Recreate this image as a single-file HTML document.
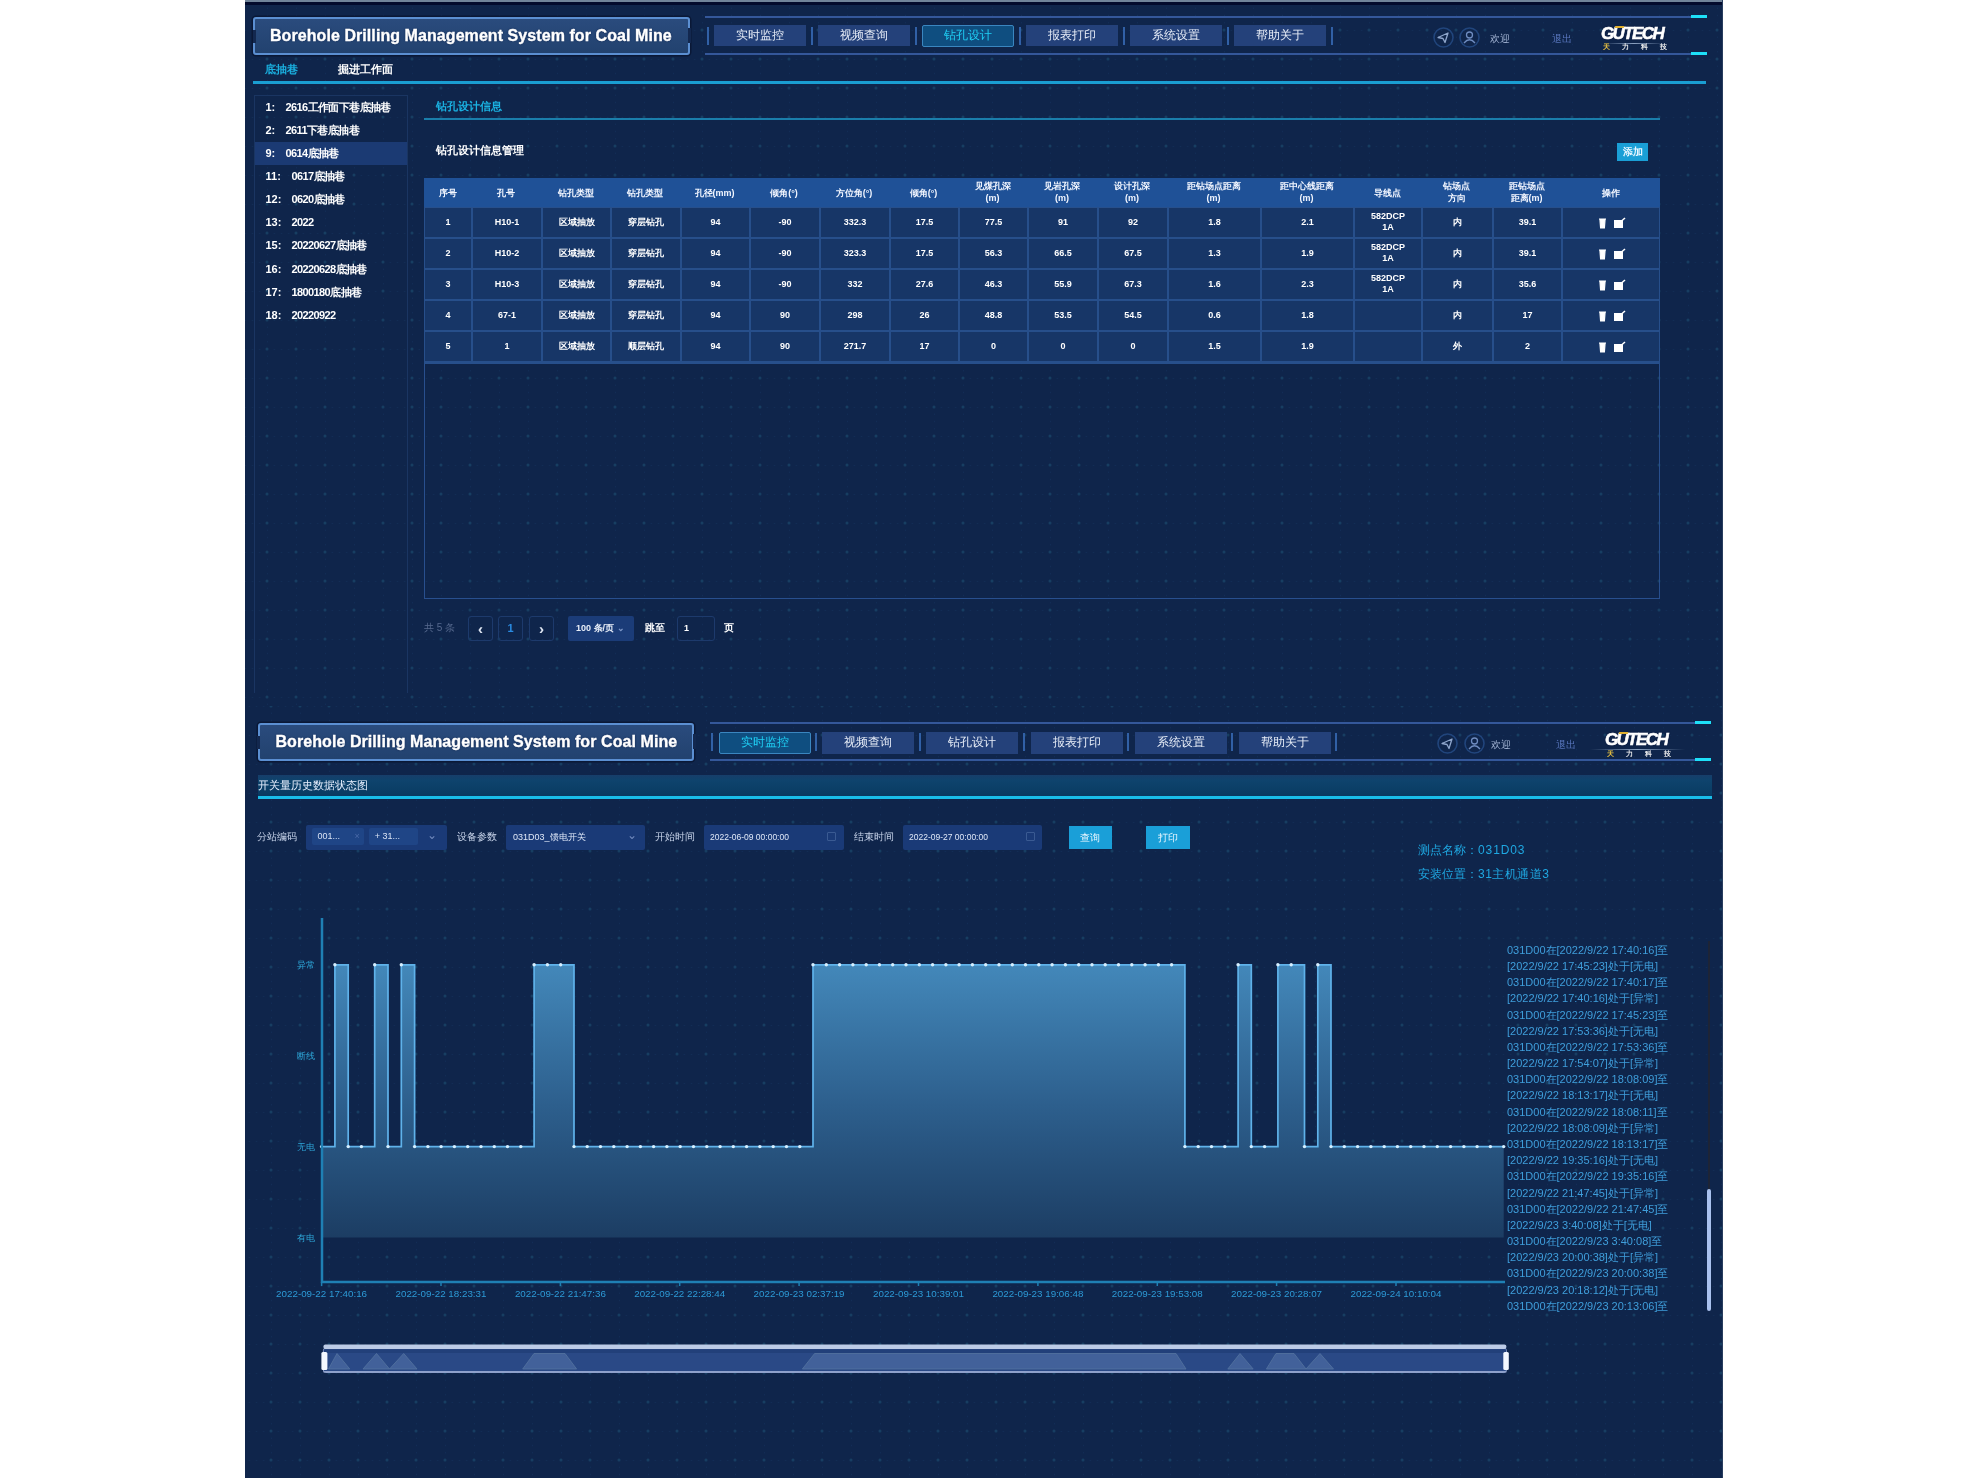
<!DOCTYPE html>
<html><head><meta charset="utf-8">
<style>
*{box-sizing:border-box;margin:0;padding:0}
html,body{width:1967px;height:1478px;overflow:hidden;background:#fff;font-family:"Liberation Sans",sans-serif}
.a{position:absolute}
#panel{filter:blur(0.5px);position:absolute;left:245px;top:0;width:1478px;height:1478px;background-color:#0f254b;overflow:hidden}

.title{position:absolute;border:2px solid #5b8fd2;border-radius:3px;background:linear-gradient(#2a4b7d,#22426f);box-shadow:0 0 0 1.5px #0a1836;text-shadow:0 0 2px #0b1c44;-webkit-text-stroke:0.35px #fff;color:#fff;font-weight:bold;font-size:16px;white-space:nowrap;line-height:34px;padding-left:15px;letter-spacing:0.07px}
.navl{position:absolute;height:2px;background:#34579a}
.sep{position:absolute;width:2px;height:18px;background:#3160a6}
.btn{position:absolute;height:21px;background:#24417a;color:#e8eef8;font-size:12px;text-align:center;line-height:21px}
.btn.on{background:#0f4e80;border:1.5px solid #3a86c0;border-radius:2px;color:#1fd0f5;line-height:19px}
.tick{position:absolute;width:16px;height:3px;background:#1ee0f8}
.cyan{position:absolute;height:3px;background:#1a9ed2}
.ico{position:absolute;width:19px;height:19px;border:1.5px solid #2f4f86;border-radius:50%}
.b{font-weight:bold}
.th{color:#f2f6ff;font-size:9px;text-align:center;white-space:nowrap}
.td{background:#173667;color:#fff;font-size:9px;text-align:center;white-space:nowrap}
.logo{color:#fff;font-weight:bold;font-style:italic;font-size:17px;line-height:18px;letter-spacing:-1.6px;-webkit-text-stroke:0.6px #fff;text-shadow:0 0 2px #000a30}
.sel{background:#1a3a77;border-radius:2px;color:#dfe8f8;font-size:9px;white-space:nowrap}
.tag{background:#1f4586;border-radius:2px;color:#d8e2f4;font-size:9px;line-height:17px;padding-left:6px;white-space:nowrap}
.qbtn{background:#1a9fd8;color:#eaf7ff;font-size:10px;line-height:23px;text-align:center}
.txt.leg{color:#3f9edb;font-size:11px}
.xl{font-family:"Liberation Sans",sans-serif;font-size:9.8px;fill:#2d9ad6}
.yl{font-family:"Liberation Sans",sans-serif;font-size:9px;fill:#2ea6d8}
.txt{position:absolute;white-space:nowrap;font-size:11px;color:#fff;line-height:12px}
</style></head><body>
<div id="panel">
 <div class="a" style="left:0;top:0;width:1478px;height:2px;background:#70849a"></div>
 <div class="a" style="left:0;top:2px;width:1478px;height:3px;background:#020a2c"></div>
 <svg class="a" style="left:0;top:0" width="1478" height="1478">
  <defs>
   <pattern id="g1" x="22" y="1" width="29" height="29" patternUnits="userSpaceOnUse">
    <g fill="#173e62"><circle cx="0" cy="0" r="1.5"/><circle cx="29" cy="0" r="1.5"/><circle cx="0" cy="29" r="1.5"/><circle cx="29" cy="29" r="1.5"/></g>
    <g fill="#13305a"><circle cx="7.25" cy="0" r=".8"/><circle cx="14.5" cy="0" r=".8"/><circle cx="21.75" cy="0" r=".8"/><circle cx="0" cy="7.25" r=".8"/><circle cx="0" cy="14.5" r=".8"/><circle cx="0" cy="21.75" r=".8"/></g>
   </pattern>
   <pattern id="g2" x="26" y="706" width="29" height="29" patternUnits="userSpaceOnUse">
    <g fill="#173e62"><circle cx="0" cy="0" r="1.5"/><circle cx="29" cy="0" r="1.5"/><circle cx="0" cy="29" r="1.5"/><circle cx="29" cy="29" r="1.5"/></g>
    <g fill="#13305a"><circle cx="7.25" cy="0" r=".8"/><circle cx="14.5" cy="0" r=".8"/><circle cx="21.75" cy="0" r=".8"/><circle cx="0" cy="7.25" r=".8"/><circle cx="0" cy="14.5" r=".8"/><circle cx="0" cy="21.75" r=".8"/></g>
   </pattern>
  </defs>
  <rect x="0" y="5" width="1478" height="701" fill="url(#g1)"/>
  <rect x="0" y="706" width="1478" height="772" fill="url(#g2)"/>
 </svg>

 <!-- ===== TOP SCREEN HEADER ===== -->
 <div class="title" style="left:8px;top:17px;width:437px;height:38px">Borehole Drilling Management System for Coal Mine</div>
 <div class="a" style="left:7.5px;top:29.5px;width:3px;height:13px;background:#13284f"></div>
 <div class="a" style="left:443px;top:28px;width:3px;height:15px;background:#13284f"></div>
 <div class="navl" style="left:460px;top:16px;width:986px"></div>
 <div class="navl" style="left:460px;top:53px;width:986px"></div>
 <div class="tick" style="left:1446px;top:15px"></div>
 <div class="tick" style="left:1446px;top:52px"></div>
 <div class="sep" style="left:462px;top:27px"></div>
 <div class="btn" style="left:469px;top:25px;width:92px">实时监控</div>
 <div class="sep" style="left:566px;top:27px"></div>
 <div class="btn" style="left:573px;top:25px;width:92px">视频查询</div>
 <div class="sep" style="left:670px;top:27px"></div>
 <div class="btn on" style="left:677px;top:25px;width:92px;height:22px">钻孔设计</div>
 <div class="sep" style="left:774px;top:27px"></div>
 <div class="btn" style="left:781px;top:25px;width:92px">报表打印</div>
 <div class="sep" style="left:878px;top:27px"></div>
 <div class="btn" style="left:885px;top:25px;width:92px">系统设置</div>
 <div class="sep" style="left:982px;top:27px"></div>
 <div class="btn" style="left:989px;top:25px;width:92px">帮助关于</div>
 <div class="sep" style="left:1086px;top:27px"></div>
 <svg class="a" style="left:1187.5px;top:27px" width="21" height="21"><circle cx="10.5" cy="10.5" r="9.5" fill="none" stroke="#21457c" stroke-width="1.6"/><path d="M5 10.5 L15 6 L12 15.5 L10 11.5 Z" fill="none" stroke="#8fa6cc" stroke-width="1.3" stroke-linejoin="round"/></svg>
 <svg class="a" style="left:1213.5px;top:27px" width="21" height="21"><circle cx="10.5" cy="10.5" r="9.5" fill="none" stroke="#21457c" stroke-width="1.6"/><circle cx="10.5" cy="8" r="3" fill="none" stroke="#6f8cc0" stroke-width="1.3"/><path d="M5 16 Q10.5 9.5 16 16" fill="none" stroke="#6f8cc0" stroke-width="1.3"/></svg>
 <div class="txt" style="left:1245px;top:33px;color:#9fb0d0;font-size:10px">欢迎</div>
 <div class="txt" style="left:1307px;top:33px;color:#5a78c0;font-size:10px">退出</div>
 <div class="a logo" style="left:1356px;top:24.5px">GUTECH</div>
 <div class="a" style="left:1370px;top:25.5px;width:9px;height:2px;background:#e0b030;transform:skewX(-20deg)"></div>
 <div class="a" style="left:1358px;top:43px;width:62px;height:1px;background:linear-gradient(90deg,transparent,#8aa0c0,transparent)"></div>
 <div class="txt b" style="left:1357.5px;top:43px;font-size:6.5px;line-height:7px;letter-spacing:12px;color:#f0f0f0"><span style="color:#e8c040">天</span>力科技</div>
 <div class="cyan" style="left:8px;top:81px;width:1453px"></div>
 <div class="txt b" style="left:20px;top:63px;color:#1ab0e0">底抽巷</div>
 <div class="txt b" style="left:93px;top:63px">掘进工作面</div>
<div class="a" id="redge" style="left:1476.5px;top:0;width:1.5px;height:1478px;background:#283d5e"></div>
<!-- TOPBODY -->
<div class="a" style="left:9px;top:95px;width:154px;height:598px;border:1px solid #1a3562;border-bottom:none"></div>
<div class="a" style="left:10px;top:142px;width:152px;height:23px;background:#1b3a73"></div>
<div class="txt b" style="left:20.5px;top:100.5px">1:</div>
<div class="txt b" style="left:40.5px;top:100.5px;letter-spacing:-0.6px">2616工作面下巷底抽巷</div>
<div class="txt b" style="left:20.5px;top:123.7px">2:</div>
<div class="txt b" style="left:40.5px;top:123.7px;letter-spacing:-0.6px">2611下巷底抽巷</div>
<div class="txt b" style="left:20.5px;top:146.8px">9:</div>
<div class="txt b" style="left:40.5px;top:146.8px;letter-spacing:-0.6px">0614底抽巷</div>
<div class="txt b" style="left:20.5px;top:169.9px">11:</div>
<div class="txt b" style="left:46.5px;top:169.9px;letter-spacing:-0.6px">0617底抽巷</div>
<div class="txt b" style="left:20.5px;top:193.1px">12:</div>
<div class="txt b" style="left:46.5px;top:193.1px;letter-spacing:-0.6px">0620底抽巷</div>
<div class="txt b" style="left:20.5px;top:216.2px">13:</div>
<div class="txt b" style="left:46.5px;top:216.2px;letter-spacing:-0.6px">2022</div>
<div class="txt b" style="left:20.5px;top:239.4px">15:</div>
<div class="txt b" style="left:46.5px;top:239.4px;letter-spacing:-0.6px">20220627底抽巷</div>
<div class="txt b" style="left:20.5px;top:262.5px">16:</div>
<div class="txt b" style="left:46.5px;top:262.5px;letter-spacing:-0.6px">20220628底抽巷</div>
<div class="txt b" style="left:20.5px;top:285.7px">17:</div>
<div class="txt b" style="left:46.5px;top:285.7px;letter-spacing:-0.6px">1800180底抽巷</div>
<div class="txt b" style="left:20.5px;top:308.9px">18:</div>
<div class="txt b" style="left:46.5px;top:308.9px;letter-spacing:-0.6px">20220922</div>
<div class="txt b" style="left:191px;top:99.5px;color:#1ab2e2">钻孔设计信息</div>
<div class="a" style="left:179px;top:117.5px;width:1236px;height:2px;background:#1a7eab"></div>
<div class="txt b" style="left:191px;top:144px">钻孔设计信息管理</div>
<div class="a b" style="left:1372px;top:143px;width:31px;height:18px;background:#1a9fd6;color:#e6f6ff;font-size:10px;line-height:18px;text-align:center">添加</div>
<div class="a" style="left:179px;top:178px;width:1236px;height:421px;border:1.5px solid #284f8e"></div>
<div class="a" style="left:179px;top:178px;width:1236px;height:30px;background:#1f5197"></div>
<div class="a" style="left:179px;top:207px;width:1236px;height:157px;background:#274f8b"></div>
<div class="a b th" style="left:179px;top:178px;width:47px;line-height:30px">序号</div>
<div class="a b th" style="left:226px;top:178px;width:70px;line-height:30px">孔号</div>
<div class="a b th" style="left:296px;top:178px;width:69px;line-height:30px">钻孔类型</div>
<div class="a b th" style="left:365px;top:178px;width:70px;line-height:30px">钻孔类型</div>
<div class="a b th" style="left:435px;top:178px;width:69px;line-height:30px">孔径(mm)</div>
<div class="a b th" style="left:504px;top:178px;width:70px;line-height:30px">倾角(°)</div>
<div class="a b th" style="left:574px;top:178px;width:70px;line-height:30px">方位角(°)</div>
<div class="a b th" style="left:644px;top:178px;width:69px;line-height:30px">倾角(°)</div>
<div class="a b th" style="left:713px;top:180px;width:69px;line-height:12px">见煤孔深<br>(m)</div>
<div class="a b th" style="left:782px;top:180px;width:70px;line-height:12px">见岩孔深<br>(m)</div>
<div class="a b th" style="left:852px;top:180px;width:70px;line-height:12px">设计孔深<br>(m)</div>
<div class="a b th" style="left:922px;top:180px;width:93px;line-height:12px">距钻场点距离<br>(m)</div>
<div class="a b th" style="left:1015px;top:180px;width:93px;line-height:12px">距中心线距离<br>(m)</div>
<div class="a b th" style="left:1108px;top:178px;width:68px;line-height:30px">导线点</div>
<div class="a b th" style="left:1176px;top:180px;width:71px;line-height:12px">钻场点<br>方向</div>
<div class="a b th" style="left:1247px;top:180px;width:69px;line-height:12px">距钻场点<br>距离(m)</div>
<div class="a b th" style="left:1316px;top:178px;width:99px;line-height:30px">操作</div>
<div class="a b td" style="left:180px;top:208px;width:46px;height:29px;line-height:29px;padding-top:0px">1</div>
<div class="a b td" style="left:228px;top:208px;width:68px;height:29px;line-height:29px;padding-top:0px">H10-1</div>
<div class="a b td" style="left:298px;top:208px;width:67px;height:29px;line-height:29px;padding-top:0px">区域抽放</div>
<div class="a b td" style="left:367px;top:208px;width:68px;height:29px;line-height:29px;padding-top:0px">穿层钻孔</div>
<div class="a b td" style="left:437px;top:208px;width:67px;height:29px;line-height:29px;padding-top:0px">94</div>
<div class="a b td" style="left:506px;top:208px;width:68px;height:29px;line-height:29px;padding-top:0px">-90</div>
<div class="a b td" style="left:576px;top:208px;width:68px;height:29px;line-height:29px;padding-top:0px">332.3</div>
<div class="a b td" style="left:646px;top:208px;width:67px;height:29px;line-height:29px;padding-top:0px">17.5</div>
<div class="a b td" style="left:715px;top:208px;width:67px;height:29px;line-height:29px;padding-top:0px">77.5</div>
<div class="a b td" style="left:784px;top:208px;width:68px;height:29px;line-height:29px;padding-top:0px">91</div>
<div class="a b td" style="left:854px;top:208px;width:68px;height:29px;line-height:29px;padding-top:0px">92</div>
<div class="a b td" style="left:924px;top:208px;width:91px;height:29px;line-height:29px;padding-top:0px">1.8</div>
<div class="a b td" style="left:1017px;top:208px;width:91px;height:29px;line-height:29px;padding-top:0px">2.1</div>
<div class="a b td" style="left:1110px;top:208px;width:66px;height:29px;line-height:11px;padding-top:3px">582DCP<br>1A</div>
<div class="a b td" style="left:1178px;top:208px;width:69px;height:29px;line-height:29px;padding-top:0px">内</div>
<div class="a b td" style="left:1249px;top:208px;width:67px;height:29px;line-height:29px;padding-top:0px">39.1</div>
<div class="a b td" style="left:1318px;top:208px;width:96px;height:29px;line-height:29px;padding-top:0px"></div>
<svg class="a" style="left:1352px;top:217px" width="30" height="12"><path d="M2 2h7M3 3h5l-.6 8h-3.8z" fill="#fff" stroke="#fff" stroke-width="1.2"/><rect x="17" y="3" width="9" height="8" fill="#fff"/><path d="M21 7l7-6" stroke="#fff" stroke-width="1.6"/></svg>
<div class="a b td" style="left:180px;top:239px;width:46px;height:29px;line-height:29px;padding-top:0px">2</div>
<div class="a b td" style="left:228px;top:239px;width:68px;height:29px;line-height:29px;padding-top:0px">H10-2</div>
<div class="a b td" style="left:298px;top:239px;width:67px;height:29px;line-height:29px;padding-top:0px">区域抽放</div>
<div class="a b td" style="left:367px;top:239px;width:68px;height:29px;line-height:29px;padding-top:0px">穿层钻孔</div>
<div class="a b td" style="left:437px;top:239px;width:67px;height:29px;line-height:29px;padding-top:0px">94</div>
<div class="a b td" style="left:506px;top:239px;width:68px;height:29px;line-height:29px;padding-top:0px">-90</div>
<div class="a b td" style="left:576px;top:239px;width:68px;height:29px;line-height:29px;padding-top:0px">323.3</div>
<div class="a b td" style="left:646px;top:239px;width:67px;height:29px;line-height:29px;padding-top:0px">17.5</div>
<div class="a b td" style="left:715px;top:239px;width:67px;height:29px;line-height:29px;padding-top:0px">56.3</div>
<div class="a b td" style="left:784px;top:239px;width:68px;height:29px;line-height:29px;padding-top:0px">66.5</div>
<div class="a b td" style="left:854px;top:239px;width:68px;height:29px;line-height:29px;padding-top:0px">67.5</div>
<div class="a b td" style="left:924px;top:239px;width:91px;height:29px;line-height:29px;padding-top:0px">1.3</div>
<div class="a b td" style="left:1017px;top:239px;width:91px;height:29px;line-height:29px;padding-top:0px">1.9</div>
<div class="a b td" style="left:1110px;top:239px;width:66px;height:29px;line-height:11px;padding-top:3px">582DCP<br>1A</div>
<div class="a b td" style="left:1178px;top:239px;width:69px;height:29px;line-height:29px;padding-top:0px">内</div>
<div class="a b td" style="left:1249px;top:239px;width:67px;height:29px;line-height:29px;padding-top:0px">39.1</div>
<div class="a b td" style="left:1318px;top:239px;width:96px;height:29px;line-height:29px;padding-top:0px"></div>
<svg class="a" style="left:1352px;top:248px" width="30" height="12"><path d="M2 2h7M3 3h5l-.6 8h-3.8z" fill="#fff" stroke="#fff" stroke-width="1.2"/><rect x="17" y="3" width="9" height="8" fill="#fff"/><path d="M21 7l7-6" stroke="#fff" stroke-width="1.6"/></svg>
<div class="a b td" style="left:180px;top:270px;width:46px;height:29px;line-height:29px;padding-top:0px">3</div>
<div class="a b td" style="left:228px;top:270px;width:68px;height:29px;line-height:29px;padding-top:0px">H10-3</div>
<div class="a b td" style="left:298px;top:270px;width:67px;height:29px;line-height:29px;padding-top:0px">区域抽放</div>
<div class="a b td" style="left:367px;top:270px;width:68px;height:29px;line-height:29px;padding-top:0px">穿层钻孔</div>
<div class="a b td" style="left:437px;top:270px;width:67px;height:29px;line-height:29px;padding-top:0px">94</div>
<div class="a b td" style="left:506px;top:270px;width:68px;height:29px;line-height:29px;padding-top:0px">-90</div>
<div class="a b td" style="left:576px;top:270px;width:68px;height:29px;line-height:29px;padding-top:0px">332</div>
<div class="a b td" style="left:646px;top:270px;width:67px;height:29px;line-height:29px;padding-top:0px">27.6</div>
<div class="a b td" style="left:715px;top:270px;width:67px;height:29px;line-height:29px;padding-top:0px">46.3</div>
<div class="a b td" style="left:784px;top:270px;width:68px;height:29px;line-height:29px;padding-top:0px">55.9</div>
<div class="a b td" style="left:854px;top:270px;width:68px;height:29px;line-height:29px;padding-top:0px">67.3</div>
<div class="a b td" style="left:924px;top:270px;width:91px;height:29px;line-height:29px;padding-top:0px">1.6</div>
<div class="a b td" style="left:1017px;top:270px;width:91px;height:29px;line-height:29px;padding-top:0px">2.3</div>
<div class="a b td" style="left:1110px;top:270px;width:66px;height:29px;line-height:11px;padding-top:3px">582DCP<br>1A</div>
<div class="a b td" style="left:1178px;top:270px;width:69px;height:29px;line-height:29px;padding-top:0px">内</div>
<div class="a b td" style="left:1249px;top:270px;width:67px;height:29px;line-height:29px;padding-top:0px">35.6</div>
<div class="a b td" style="left:1318px;top:270px;width:96px;height:29px;line-height:29px;padding-top:0px"></div>
<svg class="a" style="left:1352px;top:279px" width="30" height="12"><path d="M2 2h7M3 3h5l-.6 8h-3.8z" fill="#fff" stroke="#fff" stroke-width="1.2"/><rect x="17" y="3" width="9" height="8" fill="#fff"/><path d="M21 7l7-6" stroke="#fff" stroke-width="1.6"/></svg>
<div class="a b td" style="left:180px;top:301px;width:46px;height:29px;line-height:29px;padding-top:0px">4</div>
<div class="a b td" style="left:228px;top:301px;width:68px;height:29px;line-height:29px;padding-top:0px">67-1</div>
<div class="a b td" style="left:298px;top:301px;width:67px;height:29px;line-height:29px;padding-top:0px">区域抽放</div>
<div class="a b td" style="left:367px;top:301px;width:68px;height:29px;line-height:29px;padding-top:0px">穿层钻孔</div>
<div class="a b td" style="left:437px;top:301px;width:67px;height:29px;line-height:29px;padding-top:0px">94</div>
<div class="a b td" style="left:506px;top:301px;width:68px;height:29px;line-height:29px;padding-top:0px">90</div>
<div class="a b td" style="left:576px;top:301px;width:68px;height:29px;line-height:29px;padding-top:0px">298</div>
<div class="a b td" style="left:646px;top:301px;width:67px;height:29px;line-height:29px;padding-top:0px">26</div>
<div class="a b td" style="left:715px;top:301px;width:67px;height:29px;line-height:29px;padding-top:0px">48.8</div>
<div class="a b td" style="left:784px;top:301px;width:68px;height:29px;line-height:29px;padding-top:0px">53.5</div>
<div class="a b td" style="left:854px;top:301px;width:68px;height:29px;line-height:29px;padding-top:0px">54.5</div>
<div class="a b td" style="left:924px;top:301px;width:91px;height:29px;line-height:29px;padding-top:0px">0.6</div>
<div class="a b td" style="left:1017px;top:301px;width:91px;height:29px;line-height:29px;padding-top:0px">1.8</div>
<div class="a b td" style="left:1110px;top:301px;width:66px;height:29px;line-height:29px;padding-top:0px"></div>
<div class="a b td" style="left:1178px;top:301px;width:69px;height:29px;line-height:29px;padding-top:0px">内</div>
<div class="a b td" style="left:1249px;top:301px;width:67px;height:29px;line-height:29px;padding-top:0px">17</div>
<div class="a b td" style="left:1318px;top:301px;width:96px;height:29px;line-height:29px;padding-top:0px"></div>
<svg class="a" style="left:1352px;top:310px" width="30" height="12"><path d="M2 2h7M3 3h5l-.6 8h-3.8z" fill="#fff" stroke="#fff" stroke-width="1.2"/><rect x="17" y="3" width="9" height="8" fill="#fff"/><path d="M21 7l7-6" stroke="#fff" stroke-width="1.6"/></svg>
<div class="a b td" style="left:180px;top:332px;width:46px;height:29px;line-height:29px;padding-top:0px">5</div>
<div class="a b td" style="left:228px;top:332px;width:68px;height:29px;line-height:29px;padding-top:0px">1</div>
<div class="a b td" style="left:298px;top:332px;width:67px;height:29px;line-height:29px;padding-top:0px">区域抽放</div>
<div class="a b td" style="left:367px;top:332px;width:68px;height:29px;line-height:29px;padding-top:0px">顺层钻孔</div>
<div class="a b td" style="left:437px;top:332px;width:67px;height:29px;line-height:29px;padding-top:0px">94</div>
<div class="a b td" style="left:506px;top:332px;width:68px;height:29px;line-height:29px;padding-top:0px">90</div>
<div class="a b td" style="left:576px;top:332px;width:68px;height:29px;line-height:29px;padding-top:0px">271.7</div>
<div class="a b td" style="left:646px;top:332px;width:67px;height:29px;line-height:29px;padding-top:0px">17</div>
<div class="a b td" style="left:715px;top:332px;width:67px;height:29px;line-height:29px;padding-top:0px">0</div>
<div class="a b td" style="left:784px;top:332px;width:68px;height:29px;line-height:29px;padding-top:0px">0</div>
<div class="a b td" style="left:854px;top:332px;width:68px;height:29px;line-height:29px;padding-top:0px">0</div>
<div class="a b td" style="left:924px;top:332px;width:91px;height:29px;line-height:29px;padding-top:0px">1.5</div>
<div class="a b td" style="left:1017px;top:332px;width:91px;height:29px;line-height:29px;padding-top:0px">1.9</div>
<div class="a b td" style="left:1110px;top:332px;width:66px;height:29px;line-height:29px;padding-top:0px"></div>
<div class="a b td" style="left:1178px;top:332px;width:69px;height:29px;line-height:29px;padding-top:0px">外</div>
<div class="a b td" style="left:1249px;top:332px;width:67px;height:29px;line-height:29px;padding-top:0px">2</div>
<div class="a b td" style="left:1318px;top:332px;width:96px;height:29px;line-height:29px;padding-top:0px"></div>
<svg class="a" style="left:1352px;top:341px" width="30" height="12"><path d="M2 2h7M3 3h5l-.6 8h-3.8z" fill="#fff" stroke="#fff" stroke-width="1.2"/><rect x="17" y="3" width="9" height="8" fill="#fff"/><path d="M21 7l7-6" stroke="#fff" stroke-width="1.6"/></svg>
<div class="txt" style="left:179px;top:622px;color:#56698e;font-size:10px">共 5 条</div>
<div class="a" style="left:223px;top:616px;width:25px;height:25px;border:1px solid #1d3a6c;border-radius:3px;color:#dfe6f2;font-size:15px;line-height:23px;text-align:center;font-weight:bold">‹</div>
<div class="a" style="left:253px;top:616px;width:25px;height:25px;border:1px solid #1d3a6c;border-radius:3px;color:#2a8ae0;font-size:11px;line-height:23px;text-align:center;font-weight:bold">1</div>
<div class="a" style="left:284px;top:616px;width:25px;height:25px;border:1px solid #1d3a6c;border-radius:3px;color:#dfe6f2;font-size:15px;line-height:23px;text-align:center;font-weight:bold">›</div>
<div class="a b" style="left:323px;top:616px;width:66px;height:25px;background:#1b3c78;border-radius:2px;color:#e8eef8;font-size:9px;line-height:25px;padding-left:8px">100 条/页 <span style="color:#7f98c8">⌄</span></div>
<div class="txt b" style="left:400px;top:622px;font-size:10px">跳至</div>
<div class="a" style="left:432px;top:616px;width:38px;height:25px;border:1px solid #1d3a6c;border-radius:3px;color:#fff;font-size:9px;line-height:23px;padding-left:6px;font-weight:bold">1</div>
<div class="txt b" style="left:479px;top:622px;font-size:10px">页</div>
<!-- /TOPBODY -->
<!-- BOTBODY -->
<div class="title" style="left:12.5px;top:723px;width:436.5px;height:38px;padding-left:16px">Borehole Drilling Management System for Coal Mine</div>
<div class="a" style="left:12px;top:735.5px;width:3px;height:13px;background:#13284f"></div>
<div class="a" style="left:447.5px;top:734px;width:3px;height:15px;background:#13284f"></div>
<div class="navl" style="left:465px;top:721.5px;width:985px"></div>
<div class="navl" style="left:465px;top:759px;width:985px"></div>
<div class="tick" style="left:1450px;top:720.5px"></div>
<div class="tick" style="left:1450px;top:758px"></div>
<div class="sep" style="left:465.7px;top:733px"></div>
<div class="sep" style="left:569.8px;top:733px"></div>
<div class="sep" style="left:673.8px;top:733px"></div>
<div class="sep" style="left:777.8px;top:733px"></div>
<div class="sep" style="left:881.9px;top:733px"></div>
<div class="sep" style="left:985.9px;top:733px"></div>
<div class="sep" style="left:1089.9px;top:733px"></div>
<div class="btn on" style="left:473.5px;top:731.5px;width:92px;height:22px">实时监控</div>
<div class="btn" style="left:576.5px;top:731.5px;width:92px;height:22px">视频查询</div>
<div class="btn" style="left:680.8px;top:731.5px;width:92px;height:22px">钻孔设计</div>
<div class="btn" style="left:785.5px;top:731.5px;width:92px;height:22px">报表打印</div>
<div class="btn" style="left:889.6px;top:731.5px;width:92px;height:22px">系统设置</div>
<div class="btn" style="left:993.6px;top:731.5px;width:92px;height:22px">帮助关于</div>
<svg class="a" style="left:1192px;top:733px" width="21" height="21"><circle cx="10.5" cy="10.5" r="9.5" fill="none" stroke="#21457c" stroke-width="1.6"/><path d="M5 10.5 L15 6 L12 15.5 L10 11.5 Z" fill="none" stroke="#8fa6cc" stroke-width="1.3" stroke-linejoin="round"/></svg>
<svg class="a" style="left:1218.5px;top:733px" width="21" height="21"><circle cx="10.5" cy="10.5" r="9.5" fill="none" stroke="#21457c" stroke-width="1.6"/><circle cx="10.5" cy="8" r="3" fill="none" stroke="#6f8cc0" stroke-width="1.3"/><path d="M5 16 Q10.5 9.5 16 16" fill="none" stroke="#6f8cc0" stroke-width="1.3"/></svg>
<div class="txt" style="left:1246px;top:739px;color:#9fb0d0;font-size:10px">欢迎</div>
<div class="txt" style="left:1311px;top:739px;color:#5a78c0;font-size:10px">退出</div>
<div class="a logo" style="left:1360px;top:731px">GUTECH</div>
<div class="a" style="left:1374px;top:732px;width:9px;height:2px;background:#e0b030;transform:skewX(-20deg)"></div>
<div class="a" style="left:1345px;top:749px;width:95px;height:1px;background:linear-gradient(90deg,transparent,#8aa0c0,transparent)"></div>
<div class="txt b" style="left:1361.5px;top:749.5px;font-size:6.5px;line-height:7px;letter-spacing:12px;color:#f0f0f0"><span style="color:#e8c040">天</span>力科技</div>
<div class="a" style="left:12.5px;top:774.5px;width:1454.5px;height:21px;background:linear-gradient(#173e6a,#0e436d 25%,#0b3f67 65%,#0a3961)"></div>
<div class="a" style="left:12.5px;top:795.5px;width:1454.5px;height:3px;background:#19bdea"></div>
<div class="txt" style="left:13px;top:779px;color:#e8f0ff;font-size:11px">开关量历史数据状态图</div>
<div class="txt" style="left:12px;top:831px;color:#c8d4ea;font-size:10px">分站编码</div>
<div class="a sel" style="left:61px;top:824.5px;width:141px;height:25px"></div>
<div class="a tag" style="left:66.5px;top:828px;width:52px;height:17px">001... <span style="color:#4a6aa8;margin-left:12px">×</span></div>
<div class="a tag" style="left:123.7px;top:828px;width:49px;height:17px">+ 31...</div>
<div class="txt" style="left:182px;top:829px;color:#6f88bc;font-size:12px">⌄</div>
<div class="txt" style="left:212px;top:831px;color:#c8d4ea;font-size:10px">设备参数</div>
<div class="a sel" style="left:261px;top:824.5px;width:139px;height:25px;padding-left:7px;line-height:25px">031D03_馈电开关</div>
<div class="txt" style="left:382px;top:829px;color:#6f88bc;font-size:12px">⌄</div>
<div class="txt" style="left:410px;top:831px;color:#c8d4ea;font-size:10px">开始时间</div>
<div class="a sel" style="left:459px;top:824.5px;width:140px;height:25px;padding-left:6px;line-height:25px;font-size:8.5px">2022-06-09 00:00:00</div>
<div class="a" style="left:582px;top:832px;width:9px;height:9px;border:1px solid #3a5a92;border-radius:1px"></div>
<div class="txt" style="left:608.5px;top:831px;color:#c8d4ea;font-size:10px">结束时间</div>
<div class="a sel" style="left:658px;top:824.5px;width:139px;height:25px;padding-left:6px;line-height:25px;font-size:8.5px">2022-09-27 00:00:00</div>
<div class="a" style="left:781px;top:832px;width:9px;height:9px;border:1px solid #3a5a92;border-radius:1px"></div>
<div class="a qbtn" style="left:823.5px;top:826px;width:43px;height:23px">查询</div>
<div class="a qbtn" style="left:900.5px;top:826px;width:44px;height:23px">打印</div>
<div class="txt" style="left:1173px;top:842.5px;color:#1fa8e2;font-size:12px;line-height:14px">测点名称：<span style="letter-spacing:0.9px">031D03</span></div>
<div class="txt" style="left:1173px;top:866.5px;color:#1fa8e2;font-size:12px;line-height:14px">安装位置：<span style="letter-spacing:0.5px">31主机通道3</span></div>
<div class="txt leg" style="left:1262px;top:943.8px">031D00在[2022/9/22 17:40:16]至</div>
<div class="txt leg" style="left:1262px;top:960.0px">[2022/9/22 17:45:23]处于[无电]</div>
<div class="txt leg" style="left:1262px;top:976.2px">031D00在[2022/9/22 17:40:17]至</div>
<div class="txt leg" style="left:1262px;top:992.3px">[2022/9/22 17:40:16]处于[异常]</div>
<div class="txt leg" style="left:1262px;top:1008.5px">031D00在[2022/9/22 17:45:23]至</div>
<div class="txt leg" style="left:1262px;top:1024.7px">[2022/9/22 17:53:36]处于[无电]</div>
<div class="txt leg" style="left:1262px;top:1040.9px">031D00在[2022/9/22 17:53:36]至</div>
<div class="txt leg" style="left:1262px;top:1057.1px">[2022/9/22 17:54:07]处于[异常]</div>
<div class="txt leg" style="left:1262px;top:1073.2px">031D00在[2022/9/22 18:08:09]至</div>
<div class="txt leg" style="left:1262px;top:1089.4px">[2022/9/22 18:13:17]处于[无电]</div>
<div class="txt leg" style="left:1262px;top:1105.6px">031D00在[2022/9/22 18:08:11]至</div>
<div class="txt leg" style="left:1262px;top:1121.8px">[2022/9/22 18:08:09]处于[异常]</div>
<div class="txt leg" style="left:1262px;top:1138.0px">031D00在[2022/9/22 18:13:17]至</div>
<div class="txt leg" style="left:1262px;top:1154.1px">[2022/9/22 19:35:16]处于[无电]</div>
<div class="txt leg" style="left:1262px;top:1170.3px">031D00在[2022/9/22 19:35:16]至</div>
<div class="txt leg" style="left:1262px;top:1186.5px">[2022/9/22 21:47:45]处于[异常]</div>
<div class="txt leg" style="left:1262px;top:1202.7px">031D00在[2022/9/22 21:47:45]至</div>
<div class="txt leg" style="left:1262px;top:1218.9px">[2022/9/23 3:40:08]处于[无电]</div>
<div class="txt leg" style="left:1262px;top:1235.0px">031D00在[2022/9/23 3:40:08]至</div>
<div class="txt leg" style="left:1262px;top:1251.2px">[2022/9/23 20:00:38]处于[异常]</div>
<div class="txt leg" style="left:1262px;top:1267.4px">031D00在[2022/9/23 20:00:38]至</div>
<div class="txt leg" style="left:1262px;top:1283.6px">[2022/9/23 20:18:12]处于[无电]</div>
<div class="txt leg" style="left:1262px;top:1299.8px">031D00在[2022/9/23 20:13:06]至</div>
<div class="a" style="left:1462.5px;top:941px;width:2px;height:249px;background:#1d2436"></div>
<div class="a" style="left:1462px;top:1189px;width:3.5px;height:122px;background:#a9c1ee;border-radius:2px"></div>
<svg class="a" style="left:0;top:0" width="1478" height="1478">
<defs><linearGradient id="fg" x1="0" y1="964" x2="0" y2="1238" gradientUnits="userSpaceOnUse"><stop offset="0" stop-color="#4388ba"/><stop offset="0.515" stop-color="#2d5f8d"/><stop offset="1" stop-color="#1c3d63"/></linearGradient></defs>
<path d="M76.6,1146.6 H89.9 V964.8 H103.2 V1146.6 H116.4 V1146.6 H129.7 V964.8 H143.0 V1146.6 H156.3 V964.8 H169.6 V1146.6 H182.9 V1146.6 H196.1 V1146.6 H209.4 V1146.6 H222.7 V1146.6 H236.0 V1146.6 H249.3 V1146.6 H262.5 V1146.6 H275.8 V1146.6 H289.1 V964.8 H302.4 V964.8 H315.7 V964.8 H329.0 V1146.6 H342.2 V1146.6 H355.5 V1146.6 H368.8 V1146.6 H382.1 V1146.6 H395.4 V1146.6 H408.6 V1146.6 H421.9 V1146.6 H435.2 V1146.6 H448.5 V1146.6 H461.8 V1146.6 H475.1 V1146.6 H488.3 V1146.6 H501.6 V1146.6 H514.9 V1146.6 H528.2 V1146.6 H541.5 V1146.6 H554.8 V1146.6 H568.0 V964.8 H581.3 V964.8 H594.6 V964.8 H607.9 V964.8 H621.2 V964.8 H634.4 V964.8 H647.7 V964.8 H661.0 V964.8 H674.3 V964.8 H687.6 V964.8 H700.9 V964.8 H714.1 V964.8 H727.4 V964.8 H740.7 V964.8 H754.0 V964.8 H767.3 V964.8 H780.5 V964.8 H793.8 V964.8 H807.1 V964.8 H820.4 V964.8 H833.7 V964.8 H847.0 V964.8 H860.2 V964.8 H873.5 V964.8 H886.8 V964.8 H900.1 V964.8 H913.4 V964.8 H926.6 V964.8 H939.9 V1146.6 H953.2 V1146.6 H966.5 V1146.6 H979.8 V1146.6 H993.1 V964.8 H1006.3 V1146.6 H1019.6 V1146.6 H1032.9 V964.8 H1046.2 V964.8 H1059.5 V1146.6 H1072.8 V964.8 H1086.0 V1146.6 H1099.3 V1146.6 H1112.6 V1146.6 H1125.9 V1146.6 H1139.2 V1146.6 H1152.4 V1146.6 H1165.7 V1146.6 H1179.0 V1146.6 H1192.3 V1146.6 H1205.6 V1146.6 H1218.9 V1146.6 H1232.1 V1146.6 H1245.4 V1146.6 H1258.7 V1146.6 V1237.6 H76.6 Z" fill="url(#fg)"/>
<path d="M76.6,1146.6 H89.9 V964.8 H103.2 V1146.6 H116.4 V1146.6 H129.7 V964.8 H143.0 V1146.6 H156.3 V964.8 H169.6 V1146.6 H182.9 V1146.6 H196.1 V1146.6 H209.4 V1146.6 H222.7 V1146.6 H236.0 V1146.6 H249.3 V1146.6 H262.5 V1146.6 H275.8 V1146.6 H289.1 V964.8 H302.4 V964.8 H315.7 V964.8 H329.0 V1146.6 H342.2 V1146.6 H355.5 V1146.6 H368.8 V1146.6 H382.1 V1146.6 H395.4 V1146.6 H408.6 V1146.6 H421.9 V1146.6 H435.2 V1146.6 H448.5 V1146.6 H461.8 V1146.6 H475.1 V1146.6 H488.3 V1146.6 H501.6 V1146.6 H514.9 V1146.6 H528.2 V1146.6 H541.5 V1146.6 H554.8 V1146.6 H568.0 V964.8 H581.3 V964.8 H594.6 V964.8 H607.9 V964.8 H621.2 V964.8 H634.4 V964.8 H647.7 V964.8 H661.0 V964.8 H674.3 V964.8 H687.6 V964.8 H700.9 V964.8 H714.1 V964.8 H727.4 V964.8 H740.7 V964.8 H754.0 V964.8 H767.3 V964.8 H780.5 V964.8 H793.8 V964.8 H807.1 V964.8 H820.4 V964.8 H833.7 V964.8 H847.0 V964.8 H860.2 V964.8 H873.5 V964.8 H886.8 V964.8 H900.1 V964.8 H913.4 V964.8 H926.6 V964.8 H939.9 V1146.6 H953.2 V1146.6 H966.5 V1146.6 H979.8 V1146.6 H993.1 V964.8 H1006.3 V1146.6 H1019.6 V1146.6 H1032.9 V964.8 H1046.2 V964.8 H1059.5 V1146.6 H1072.8 V964.8 H1086.0 V1146.6 H1099.3 V1146.6 H1112.6 V1146.6 H1125.9 V1146.6 H1139.2 V1146.6 H1152.4 V1146.6 H1165.7 V1146.6 H1179.0 V1146.6 H1192.3 V1146.6 H1205.6 V1146.6 H1218.9 V1146.6 H1232.1 V1146.6 H1245.4 V1146.6 H1258.7 V1146.6" fill="none" stroke="#5fb2ea" stroke-width="1.7"/>
<circle cx="76.6" cy="1146.6" r="1.7" fill="#d6efff"/>
<circle cx="89.9" cy="964.8" r="1.7" fill="#d6efff"/>
<circle cx="103.2" cy="1146.6" r="1.7" fill="#d6efff"/>
<circle cx="116.4" cy="1146.6" r="1.7" fill="#d6efff"/>
<circle cx="129.7" cy="964.8" r="1.7" fill="#d6efff"/>
<circle cx="143.0" cy="1146.6" r="1.7" fill="#d6efff"/>
<circle cx="156.3" cy="964.8" r="1.7" fill="#d6efff"/>
<circle cx="169.6" cy="1146.6" r="1.7" fill="#d6efff"/>
<circle cx="182.9" cy="1146.6" r="1.7" fill="#d6efff"/>
<circle cx="196.1" cy="1146.6" r="1.7" fill="#d6efff"/>
<circle cx="209.4" cy="1146.6" r="1.7" fill="#d6efff"/>
<circle cx="222.7" cy="1146.6" r="1.7" fill="#d6efff"/>
<circle cx="236.0" cy="1146.6" r="1.7" fill="#d6efff"/>
<circle cx="249.3" cy="1146.6" r="1.7" fill="#d6efff"/>
<circle cx="262.5" cy="1146.6" r="1.7" fill="#d6efff"/>
<circle cx="275.8" cy="1146.6" r="1.7" fill="#d6efff"/>
<circle cx="289.1" cy="964.8" r="1.7" fill="#d6efff"/>
<circle cx="302.4" cy="964.8" r="1.7" fill="#d6efff"/>
<circle cx="315.7" cy="964.8" r="1.7" fill="#d6efff"/>
<circle cx="329.0" cy="1146.6" r="1.7" fill="#d6efff"/>
<circle cx="342.2" cy="1146.6" r="1.7" fill="#d6efff"/>
<circle cx="355.5" cy="1146.6" r="1.7" fill="#d6efff"/>
<circle cx="368.8" cy="1146.6" r="1.7" fill="#d6efff"/>
<circle cx="382.1" cy="1146.6" r="1.7" fill="#d6efff"/>
<circle cx="395.4" cy="1146.6" r="1.7" fill="#d6efff"/>
<circle cx="408.6" cy="1146.6" r="1.7" fill="#d6efff"/>
<circle cx="421.9" cy="1146.6" r="1.7" fill="#d6efff"/>
<circle cx="435.2" cy="1146.6" r="1.7" fill="#d6efff"/>
<circle cx="448.5" cy="1146.6" r="1.7" fill="#d6efff"/>
<circle cx="461.8" cy="1146.6" r="1.7" fill="#d6efff"/>
<circle cx="475.1" cy="1146.6" r="1.7" fill="#d6efff"/>
<circle cx="488.3" cy="1146.6" r="1.7" fill="#d6efff"/>
<circle cx="501.6" cy="1146.6" r="1.7" fill="#d6efff"/>
<circle cx="514.9" cy="1146.6" r="1.7" fill="#d6efff"/>
<circle cx="528.2" cy="1146.6" r="1.7" fill="#d6efff"/>
<circle cx="541.5" cy="1146.6" r="1.7" fill="#d6efff"/>
<circle cx="554.8" cy="1146.6" r="1.7" fill="#d6efff"/>
<circle cx="568.0" cy="964.8" r="1.7" fill="#d6efff"/>
<circle cx="581.3" cy="964.8" r="1.7" fill="#d6efff"/>
<circle cx="594.6" cy="964.8" r="1.7" fill="#d6efff"/>
<circle cx="607.9" cy="964.8" r="1.7" fill="#d6efff"/>
<circle cx="621.2" cy="964.8" r="1.7" fill="#d6efff"/>
<circle cx="634.4" cy="964.8" r="1.7" fill="#d6efff"/>
<circle cx="647.7" cy="964.8" r="1.7" fill="#d6efff"/>
<circle cx="661.0" cy="964.8" r="1.7" fill="#d6efff"/>
<circle cx="674.3" cy="964.8" r="1.7" fill="#d6efff"/>
<circle cx="687.6" cy="964.8" r="1.7" fill="#d6efff"/>
<circle cx="700.9" cy="964.8" r="1.7" fill="#d6efff"/>
<circle cx="714.1" cy="964.8" r="1.7" fill="#d6efff"/>
<circle cx="727.4" cy="964.8" r="1.7" fill="#d6efff"/>
<circle cx="740.7" cy="964.8" r="1.7" fill="#d6efff"/>
<circle cx="754.0" cy="964.8" r="1.7" fill="#d6efff"/>
<circle cx="767.3" cy="964.8" r="1.7" fill="#d6efff"/>
<circle cx="780.5" cy="964.8" r="1.7" fill="#d6efff"/>
<circle cx="793.8" cy="964.8" r="1.7" fill="#d6efff"/>
<circle cx="807.1" cy="964.8" r="1.7" fill="#d6efff"/>
<circle cx="820.4" cy="964.8" r="1.7" fill="#d6efff"/>
<circle cx="833.7" cy="964.8" r="1.7" fill="#d6efff"/>
<circle cx="847.0" cy="964.8" r="1.7" fill="#d6efff"/>
<circle cx="860.2" cy="964.8" r="1.7" fill="#d6efff"/>
<circle cx="873.5" cy="964.8" r="1.7" fill="#d6efff"/>
<circle cx="886.8" cy="964.8" r="1.7" fill="#d6efff"/>
<circle cx="900.1" cy="964.8" r="1.7" fill="#d6efff"/>
<circle cx="913.4" cy="964.8" r="1.7" fill="#d6efff"/>
<circle cx="926.6" cy="964.8" r="1.7" fill="#d6efff"/>
<circle cx="939.9" cy="1146.6" r="1.7" fill="#d6efff"/>
<circle cx="953.2" cy="1146.6" r="1.7" fill="#d6efff"/>
<circle cx="966.5" cy="1146.6" r="1.7" fill="#d6efff"/>
<circle cx="979.8" cy="1146.6" r="1.7" fill="#d6efff"/>
<circle cx="993.1" cy="964.8" r="1.7" fill="#d6efff"/>
<circle cx="1006.3" cy="1146.6" r="1.7" fill="#d6efff"/>
<circle cx="1019.6" cy="1146.6" r="1.7" fill="#d6efff"/>
<circle cx="1032.9" cy="964.8" r="1.7" fill="#d6efff"/>
<circle cx="1046.2" cy="964.8" r="1.7" fill="#d6efff"/>
<circle cx="1059.5" cy="1146.6" r="1.7" fill="#d6efff"/>
<circle cx="1072.8" cy="964.8" r="1.7" fill="#d6efff"/>
<circle cx="1086.0" cy="1146.6" r="1.7" fill="#d6efff"/>
<circle cx="1099.3" cy="1146.6" r="1.7" fill="#d6efff"/>
<circle cx="1112.6" cy="1146.6" r="1.7" fill="#d6efff"/>
<circle cx="1125.9" cy="1146.6" r="1.7" fill="#d6efff"/>
<circle cx="1139.2" cy="1146.6" r="1.7" fill="#d6efff"/>
<circle cx="1152.4" cy="1146.6" r="1.7" fill="#d6efff"/>
<circle cx="1165.7" cy="1146.6" r="1.7" fill="#d6efff"/>
<circle cx="1179.0" cy="1146.6" r="1.7" fill="#d6efff"/>
<circle cx="1192.3" cy="1146.6" r="1.7" fill="#d6efff"/>
<circle cx="1205.6" cy="1146.6" r="1.7" fill="#d6efff"/>
<circle cx="1218.9" cy="1146.6" r="1.7" fill="#d6efff"/>
<circle cx="1232.1" cy="1146.6" r="1.7" fill="#d6efff"/>
<circle cx="1245.4" cy="1146.6" r="1.7" fill="#d6efff"/>
<circle cx="1258.7" cy="1146.6" r="1.7" fill="#d6efff"/>
<line x1="77" y1="918" x2="77" y2="1283" stroke="#1f80b4" stroke-width="2.5"/>
<line x1="76" y1="1282" x2="1260" y2="1282" stroke="#1f80b4" stroke-width="2.5"/>
<line x1="76.6" y1="1282" x2="76.6" y2="1286" stroke="#1f80b4" stroke-width="1.5"/>
<text x="76.6" y="1297" text-anchor="middle" class="xl">2022-09-22 17:40:16</text>
<line x1="196.0" y1="1282" x2="196.0" y2="1286" stroke="#1f80b4" stroke-width="1.5"/>
<text x="196.0" y="1297" text-anchor="middle" class="xl">2022-09-22 18:23:31</text>
<line x1="315.4" y1="1282" x2="315.4" y2="1286" stroke="#1f80b4" stroke-width="1.5"/>
<text x="315.4" y="1297" text-anchor="middle" class="xl">2022-09-22 21:47:36</text>
<line x1="434.7" y1="1282" x2="434.7" y2="1286" stroke="#1f80b4" stroke-width="1.5"/>
<text x="434.7" y="1297" text-anchor="middle" class="xl">2022-09-22 22:28:44</text>
<line x1="554.1" y1="1282" x2="554.1" y2="1286" stroke="#1f80b4" stroke-width="1.5"/>
<text x="554.1" y="1297" text-anchor="middle" class="xl">2022-09-23 02:37:19</text>
<line x1="673.5" y1="1282" x2="673.5" y2="1286" stroke="#1f80b4" stroke-width="1.5"/>
<text x="673.5" y="1297" text-anchor="middle" class="xl">2022-09-23 10:39:01</text>
<line x1="792.9" y1="1282" x2="792.9" y2="1286" stroke="#1f80b4" stroke-width="1.5"/>
<text x="792.9" y="1297" text-anchor="middle" class="xl">2022-09-23 19:06:48</text>
<line x1="912.3" y1="1282" x2="912.3" y2="1286" stroke="#1f80b4" stroke-width="1.5"/>
<text x="912.3" y="1297" text-anchor="middle" class="xl">2022-09-23 19:53:08</text>
<line x1="1031.6" y1="1282" x2="1031.6" y2="1286" stroke="#1f80b4" stroke-width="1.5"/>
<text x="1031.6" y="1297" text-anchor="middle" class="xl">2022-09-23 20:28:07</text>
<line x1="1151.0" y1="1282" x2="1151.0" y2="1286" stroke="#1f80b4" stroke-width="1.5"/>
<text x="1151.0" y="1297" text-anchor="middle" class="xl">2022-09-24 10:10:04</text>
<text x="70" y="968.3" text-anchor="end" class="yl">异常</text>
<text x="70" y="1059.2" text-anchor="end" class="yl">断线</text>
<text x="70" y="1150.1" text-anchor="end" class="yl">无电</text>
<text x="70" y="1241.0" text-anchor="end" class="yl">有电</text>
<rect x="78.4" y="1348" width="1183" height="24.5" rx="2.5" fill="#2a4986" stroke="#8c9fcb" stroke-width="1"/><rect x="79" y="1349.5" width="1182" height="3.5" fill="#22407a"/>
<rect x="78.4" y="1371" width="1183" height="1.5" fill="#8fa2cc"/>
<path d="M83.5,1369 L92,1353.5 L92,1353.5 L104.80000000000001,1369 Z" fill="#42619a" stroke="#54739f" stroke-width="0.8"/>
<path d="M118,1369 L131.5,1353.5 L131.5,1353.5 L144.5,1369 Z" fill="#42619a" stroke="#54739f" stroke-width="0.8"/>
<path d="M144.5,1369 L158.7,1353.5 L158.7,1353.5 L172,1369 Z" fill="#42619a" stroke="#54739f" stroke-width="0.8"/>
<path d="M277.70000000000005,1369 L289,1353.5 L320,1353.5 L331.6,1369 Z" fill="#42619a" stroke="#54739f" stroke-width="0.8"/>
<path d="M557.4,1369 L569.6,1353.5 L931,1353.5 L941,1369 Z" fill="#42619a" stroke="#54739f" stroke-width="0.8"/>
<path d="M982.8,1369 L995,1353.5 L995,1353.5 L1008.2,1369 Z" fill="#42619a" stroke="#54739f" stroke-width="0.8"/>
<path d="M1021.4000000000001,1369 L1031,1353.5 L1049,1353.5 L1061,1369 Z" fill="#42619a" stroke="#54739f" stroke-width="0.8"/>
<path d="M1061,1369 L1075,1353.5 L1075,1353.5 L1088.5,1369 Z" fill="#42619a" stroke="#54739f" stroke-width="0.8"/>
<rect x="78.4" y="1344.5" width="1183" height="4.5" rx="2" fill="#bccbe6"/>
<rect x="76.4" y="1352" width="6" height="18" rx="1.5" fill="#f4f8ff"/>
<rect x="1258.3" y="1352" width="5.5" height="18" rx="1.5" fill="#f4f8ff"/>
</svg>
<!-- /BOTBODY -->
</div>
</body></html>
